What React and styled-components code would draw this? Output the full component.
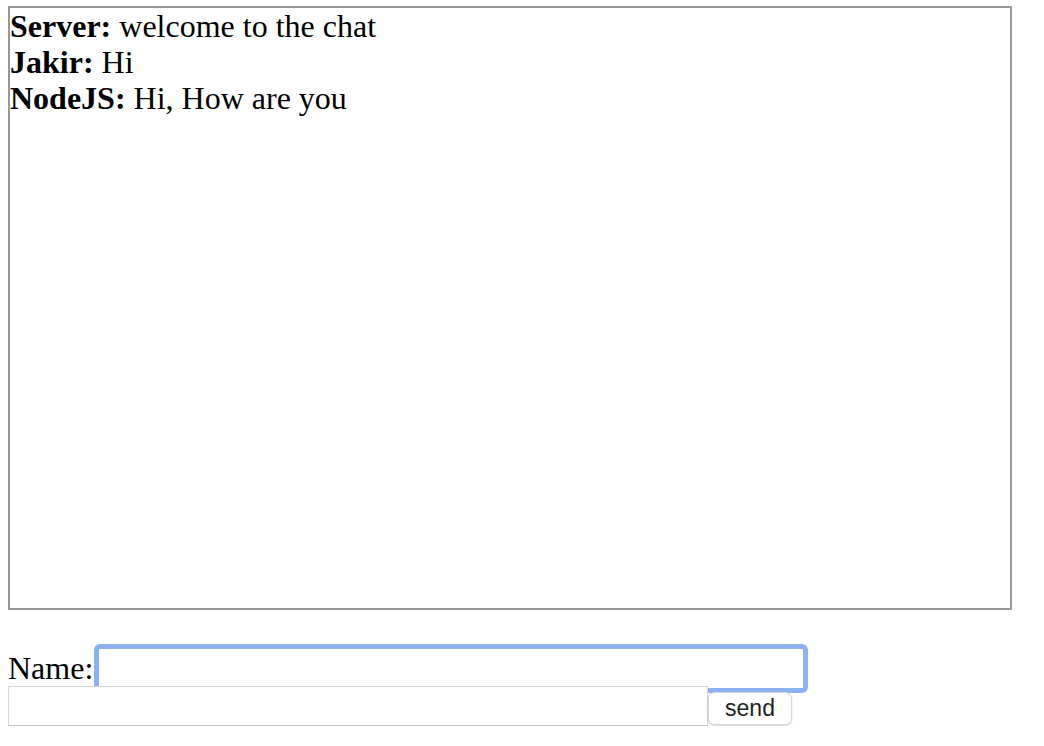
import React from "react";
import styled, { createGlobalStyle } from "styled-components";

const Global = createGlobalStyle`
  html, body { background: #fff; }
  body {
    margin: 6px 8px 8px 8px;
    font-family: "Liberation Serif", "Times New Roman", serif;
    color: #000;
  }
`;

const ChatBox = styled.div`
  box-sizing: content-box;
  width: 1000px;
  height: 600px;
  border: 2px solid #979797;
  font-size: 32px;
  line-height: 36px;
  overflow-y: auto;
`;

const Message = styled.div`
  white-space: nowrap;
`;

const Sender = styled.b`
  font-weight: bold;
`;

const Form = styled.form`
  margin-top: 38px;
  display: flex;
  flex-direction: column;
  font-size: 32px;
`;

const Row = styled.div`
  display: flex;
  align-items: flex-end;
  margin-top: ${(p) => p.$overlap || 0}px;
  position: relative;
  z-index: ${(p) => p.$layer || 0};
`;

const Label = styled.label`
  line-height: 36px;
  margin-bottom: 3px;
  margin-right: 5px;
`;

const TextInput = styled.input`
  box-sizing: border-box;
  width: ${(p) => p.$width}px;
  height: ${(p) => (p.$focused ? 41 : 40)}px;
  margin: 0;
  padding: 0 6px;
  font-family: "Liberation Sans", Arial, sans-serif;
  font-size: 16px;
  background: #fff;
  border: 1px solid ${(p) => (p.$focused ? "#9a9a9a" : "#d6d6d6")};
  border-bottom-color: #c4c4c4;
  border-radius: ${(p) => (p.$focused ? "2px" : "0")};
  outline: ${(p) => (p.$focused ? "5px solid #8cb2f4" : "none")};
  outline-offset: -1px;
`;

const SendButton = styled.button`
  box-sizing: border-box;
  width: 84px;
  height: 33px;
  margin: 0 0 1px 0;
  padding: 0;
  font-family: "Liberation Sans", Arial, sans-serif;
  font-size: 23px;
  color: #222;
  background: #fff;
  border: 1px solid #d8d8d8;
  border-radius: 7px;
  box-shadow: 0 1px 2px rgba(0, 0, 0, 0.18);
`;

const messages = [
  { from: "Server", text: "welcome to the chat" },
  { from: "Jakir", text: "Hi" },
  { from: "NodeJS", text: "Hi, How are you" },
];

export default function App() {
  return (
    <>
      <Global />
      <ChatBox>
        {messages.map((m, i) => (
          <Message key={i}>
            <Sender>{m.from}:</Sender> {m.text}
          </Message>
        ))}
      </ChatBox>
      <Form onSubmit={(e) => e.preventDefault()}>
        <Row $layer={0}>
          <Label htmlFor="name">Name:</Label>
          <TextInput id="name" $width={706} $focused />
        </Row>
        <Row $overlap={-3} $layer={1}>
          <TextInput $width={700} />
          <SendButton type="submit">send</SendButton>
        </Row>
      </Form>
    </>
  );
}
